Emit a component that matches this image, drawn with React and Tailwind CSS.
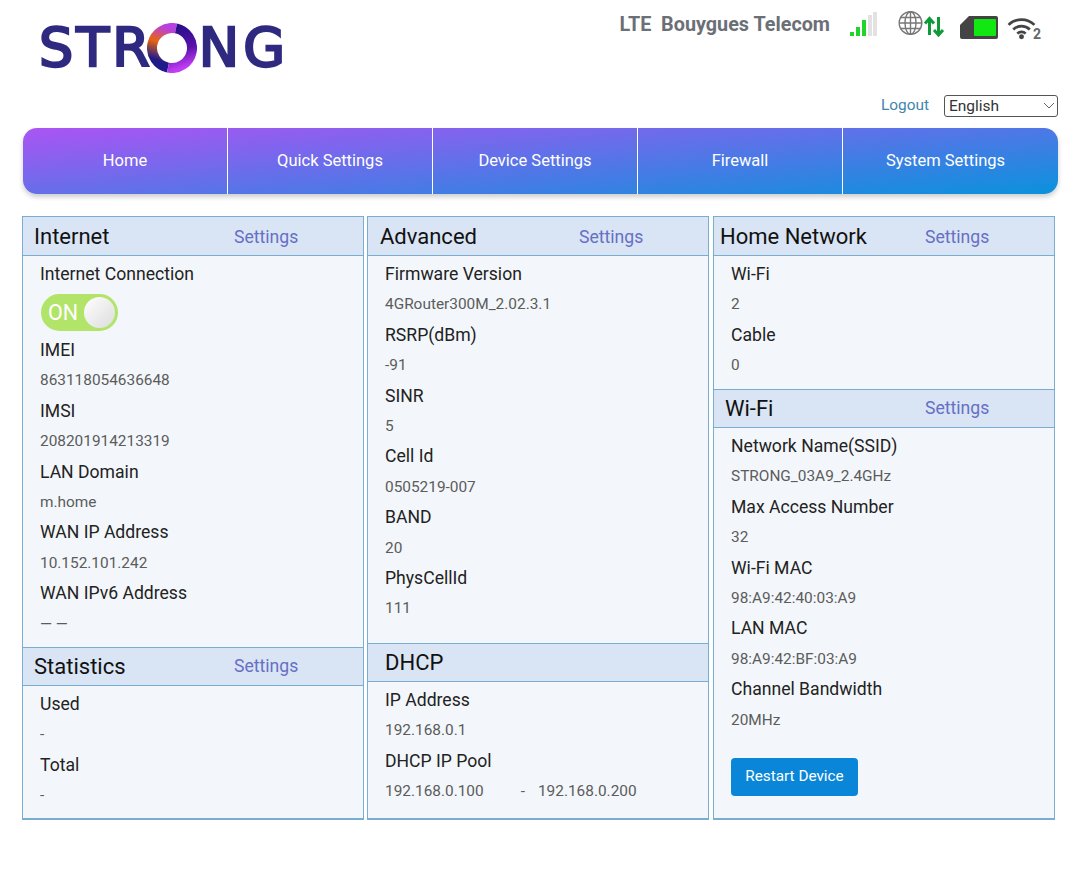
import React from 'react';

const Logo = () => (
  <div className="flex items-center h-[52px] text-[#2f2a80] font-['DejaVu_Sans',sans-serif] text-[54px] leading-none [-webkit-text-stroke:2.4px_#2f2a80]">
    <span className="tracking-[3px]">STR</span>
    <svg width="50" height="50" viewBox="0 0 50 50" className="ml-[-6px] mr-[2px] shrink-0">
      <defs>
        <linearGradient id="ringA" x1="0.6" y1="0" x2="0.4" y2="1">
          <stop offset="0" stopColor="#b83fe0" />
          <stop offset="0.4" stopColor="#e8650f" />
          <stop offset="0.85" stopColor="#1f1a8a" />
        </linearGradient>
        <linearGradient id="ringB" x1="0.4" y1="0" x2="0.6" y2="1">
          <stop offset="0" stopColor="#2b0f8a" />
          <stop offset="0.55" stopColor="#5a12a8" />
          <stop offset="1" stopColor="#c13cf5" />
        </linearGradient>
      </defs>
      <path d="M29 5.400 A20 20 0 0 0 21 44.600" fill="none" stroke="url(#ringA)" strokeWidth="10" />
      <path d="M29 5.400 A20 20 0 0 1 21 44.600" fill="none" stroke="url(#ringB)" strokeWidth="10" />
    </svg>
    <span className="tracking-[4px]">NG</span>
  </div>
);

const StatusIcons = () => (
  <div className="flex items-start">
    <svg width="30" height="28" viewBox="0 0 30 28" className="ml-[19px] mt-[8px]">
      <rect x="1" y="21" width="4" height="4" fill="#22d428" />
      <rect x="7" y="16" width="4" height="9" fill="#22d428" />
      <rect x="13" y="9" width="4" height="16" fill="#22d428" />
      <rect x="19" y="4" width="4" height="21" fill="#e2e2e2" />
      <rect x="24" y="1" width="4" height="24" fill="#e2e2e2" />
    </svg>
    <svg width="47" height="30" viewBox="0 0 47 30" className="ml-[19px] mt-[6px]">
      <g fill="none" stroke="#777" strokeWidth="1.400">
        <circle cx="12.500" cy="14" r="11.300" />
        <ellipse cx="12.500" cy="14" rx="5.500" ry="11.300" />
        <path d="M12.500 3v22M1.500 14h22M3 8.500h19M3 19.500h19" />
      </g>
      <path d="M31.500 26V10M27 14.500l4.500-5 4.500 5M40.500 8v17M36 21l4.500 5 4.500-5" fill="none" stroke="#0f9a3a" strokeWidth="3" />
    </svg>
    <svg width="40" height="26" viewBox="0 0 40 26" className="ml-[15px] mt-[13px]">
      <path d="M9 0h27a2 2 0 0 1 2 2v19a2 2 0 0 1-2 2H2a2 2 0 0 1-2-2V9z" fill="#444" />
      <rect x="14" y="3" width="22" height="17" rx="1" fill="#11e811" />
    </svg>
    <div className="relative ml-[7px] mt-[15px] w-[36px] h-[26px]">
      <svg width="29" height="22" viewBox="0 2 28 21">
        <g fill="none" stroke="#444" strokeWidth="2.600">
          <path d="M1.500 8.500a18 18 0 0 1 25 0" />
          <path d="M6 13a11.500 11.500 0 0 1 16 0" />
          <path d="M10 17a5.500 5.500 0 0 1 8 0" />
        </g>
        <circle cx="14" cy="20" r="2.400" fill="#444" />
      </svg>
      <span className="absolute left-[26px] top-[8px] text-[14px] leading-[16px] font-bold text-[#666]">2</span>
    </div>
  </div>
);

const Row = ({ label, value }) => (
  <>
    <div className="h-[30.4px] leading-[30.4px] text-[17.6px] text-[#222]">{label}</div>
    <div className="h-[30.4px] leading-[30.4px] text-[15.4px] text-[#5c5c5c]">{value}</div>
  </>
);

// "lower" sections sit under another one in the column, their header is 1px shorter
const Section = ({ title, settings, titlePad = 'pl-[11px]', lower = false, bodyClass = '', children }) => (
  <section className={`flex flex-col ${bodyClass}`}>
    <div className={`${lower ? 'h-[39px]' : 'h-[40px]'} shrink-0 flex items-center bg-[#d9e4f4] border border-[#79aed0] text-[22px] text-[#111]`}>
      <span className={`w-[211px] ${titlePad}`}>{title}</span>
      {settings && <span className={`${lower ? '' : 'pt-[2px]'} text-[17.6px] text-[#6670c4]`}>Settings</span>}
    </div>
    <div className="flex-1 bg-[#f3f7fb] border-x border-[#79aed0] pl-[17px] pt-[3px]">{children}</div>
  </section>
);

const navItems = ['Home', 'Quick Settings', 'Device Settings', 'Firewall', 'System Settings'];

export default function App() {
  return (
    <div className="w-[1080px] h-[886px] bg-white font-['Roboto',sans-serif] overflow-hidden">
      <header className="flex justify-between h-[95px]">
        <div className="pl-[39px] pt-[22px]"><Logo /></div>
        <div className="flex items-start pr-[37px] pt-[3px]">
          <span className="text-[19.8px] font-bold text-[#6b6f76] leading-[44px] whitespace-pre">LTE  Bouygues Telecom</span>
          <StatusIcons />
        </div>
      </header>

      <div className="flex justify-end items-center h-[22px] pr-[22px]">
        <span className="text-[15.4px] text-[#3f86ad] mr-[15px]">Logout</span>
        <div className="relative w-[114px] h-[22px] border border-[#555] rounded-[3px] pl-[4px] text-[15.5px] leading-[20px] text-[#333]">
          English
          <svg width="12" height="7" viewBox="0 0 12 7" className="absolute right-[2px] top-[6px]">
            <path d="M1 1l5 5 5-5" fill="none" stroke="#666" strokeWidth="1" />
          </svg>
        </div>
      </div>

      <nav className="mt-[11px] ml-[23px] w-[1035px] h-[66px] flex rounded-[14px] bg-[linear-gradient(175deg,#ab54f4,#0a92dc)] shadow-[0_3px_5px_rgba(0,0,0,0.2)]">
        {navItems.map((item, i) => (
          <div key={item} className={`w-[205px] flex items-center justify-center text-white text-[16.5px] ${i < 4 ? 'border-r border-white' : ''}`}>
            {item}
          </div>
        ))}
      </nav>

      <main className="mt-[22px] ml-[22px] w-[1033px] h-[604px] flex gap-[3px]">
        <div className="w-[342px] flex flex-col border-b-2 border-[#79aed0]">
          <Section title="Internet" settings bodyClass="h-[431px]">
            <div className="h-[30.4px] leading-[30.4px] text-[17.6px] text-[#222]">Internet Connection</div>
            <div className="h-[45.6px] flex items-center">
              <div className="relative ml-[1px] w-[77px] h-[37px] rounded-full bg-[#b2e469] border-[3px] border-[#b2e469]">
                <span className="absolute left-[4px] top-[3px] text-[21.5px] leading-[25px] text-white">ON</span>
                <span className="absolute right-0 top-0 w-[31px] h-[31px] rounded-full bg-gradient-to-br from-white to-[#dcdcdc]" />
              </div>
            </div>
            <Row label="IMEI" value="863118054636648" />
            <Row label="IMSI" value="208201914213319" />
            <Row label="LAN Domain" value="m.home" />
            <Row label="WAN IP Address" value="10.152.101.242" />
            <Row label="WAN IPv6 Address" value="— —" />
          </Section>
          <Section title="Statistics" settings lower bodyClass="flex-1">
            <Row label="Used" value="-" />
            <Row label="Total" value="-" />
          </Section>
        </div>

        <div className="w-[342px] flex flex-col border-b-2 border-[#79aed0]">
          <Section title="Advanced" settings titlePad="pl-[12px]" bodyClass="h-[427px]">
            <Row label="Firmware Version" value="4GRouter300M_2.02.3.1" />
            <Row label="RSRP(dBm)" value="-91" />
            <Row label="SINR" value="5" />
            <Row label="Cell Id" value="0505219-007" />
            <Row label="BAND" value="20" />
            <Row label="PhysCellId" value="111" />
          </Section>
          <Section title="DHCP" titlePad="pl-[17px]" lower bodyClass="flex-1">
            <Row label="IP Address" value="192.168.0.1" />
            <Row label="DHCP IP Pool" value={<span className="whitespace-pre">192.168.0.100<span className="ml-[37px]">-</span><span className="ml-[13px]">192.168.0.200</span></span>} />
          </Section>
        </div>

        <div className="w-[342px] ml-[1px] flex flex-col border-b-2 border-[#79aed0]">
          <Section title="Home Network" settings titlePad="pl-[6px]" bodyClass="h-[173px]">
            <Row label="Wi-Fi" value="2" />
            <Row label="Cable" value="0" />
          </Section>
          <Section title="Wi-Fi" settings lower bodyClass="flex-1">
            <Row label="Network Name(SSID)" value="STRONG_03A9_2.4GHz" />
            <Row label="Max Access Number" value="32" />
            <Row label="Wi-Fi MAC" value="98:A9:42:40:03:A9" />
            <Row label="LAN MAC" value="98:A9:42:BF:03:A9" />
            <Row label="Channel Bandwidth" value="20MHz" />
            <div className="mt-[23px] w-[127px] h-[38px] rounded-[4px] bg-[#0a86d8] text-white text-[15.3px] flex items-center justify-center">Restart Device</div>
          </Section>
        </div>
      </main>
    </div>
  );
}
